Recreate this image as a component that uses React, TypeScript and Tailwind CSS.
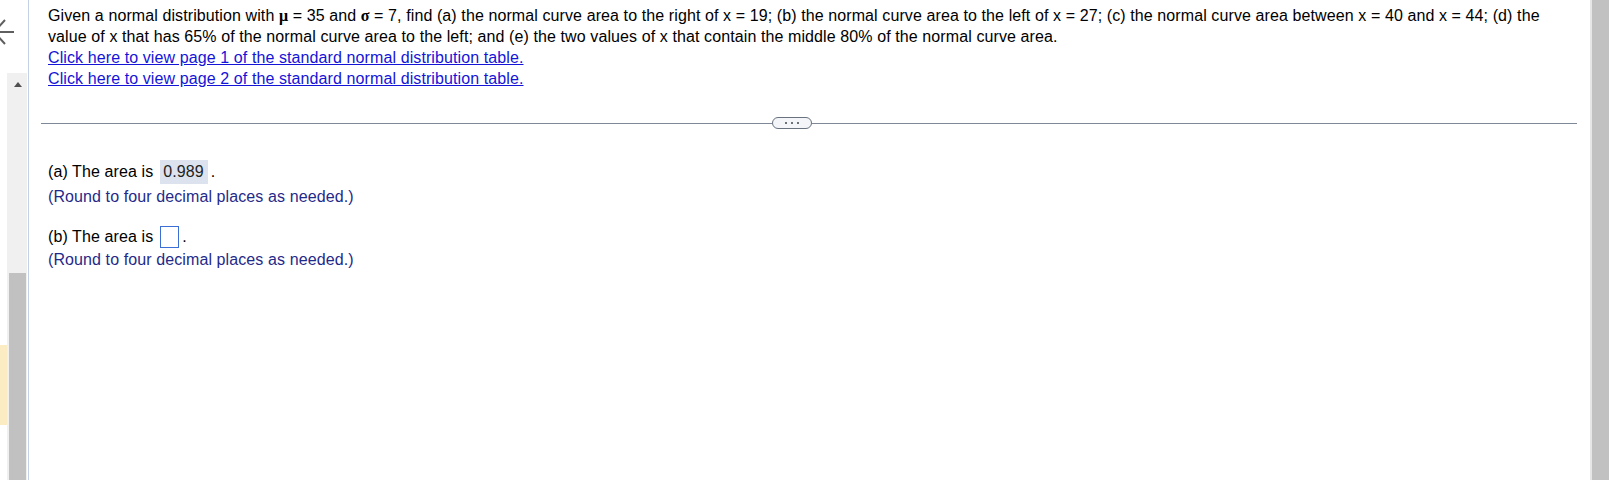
const FONT = { fontFamily: '"Liberation Sans", Arial, sans-serif' }
const SERIF = { fontFamily: '"Liberation Serif", "Times New Roman", serif' }

function LeftRail() {
  return (
    <div className="relative flex h-full w-[29px] shrink-0 border-r border-[#c4d0e6]">
      {/* back arrow, partly cut off by the window edge */}
      <svg className="absolute left-[-8px] top-[17px]" width="24" height="30" viewBox="0 0 24 30" fill="none">
        <path d="M22 15H2M2 15L13 3M2 15L13 27" stroke="#5f5f5f" strokeWidth="2" />
      </svg>
      <div className="w-[7px] shrink-0">
        <div className="mt-[345px] h-[80px] bg-[#fbecc3]" />
      </div>
      <div className="mt-[73px] flex w-[20px] shrink-0 flex-col bg-[#f0f0f0]">
        <div className="mt-[9px] flex justify-center pl-[1px]">
          <div className="h-0 w-0 border-x-[4px] border-b-[5px] border-x-transparent border-b-[#505050]" />
        </div>
        <div className="ml-[2px] mr-[1px] mt-[186px] flex-1 bg-[#c1c1c1]" />
      </div>
    </div>
  )
}

function Divider() {
  return (
    <div className="ml-[12px] mr-[13px] mt-[28px] flex h-[12px] items-center">
      <div className="h-px w-[731px] bg-[#7f8896]" />
      <div className="flex h-[12px] w-[40px] shrink-0 items-center justify-center gap-[4px] rounded-full border border-[#69727f] bg-[#f3f5f8]">
        <span className="h-[2px] w-[2px] rounded-full bg-[#3f4650]" />
        <span className="h-[2px] w-[2px] rounded-full bg-[#3f4650]" />
        <span className="h-[2px] w-[2px] rounded-full bg-[#3f4650]" />
      </div>
      <div className="h-px flex-1 bg-[#7f8896]" />
    </div>
  )
}

export default function App() {
  return (
    <div style={FONT} className="flex h-[480px] w-[1610px] overflow-hidden bg-white text-[16px] tracking-[0.1px] text-black">
      <LeftRail />

      <main className="flex min-w-0 flex-1 flex-col">
        <div className="pl-[19px] pr-[22px] pt-[5px] leading-[21px]">
          <p>
            Given a normal distribution with <span style={SERIF} className="font-bold">μ</span> = 35 and{' '}
            <span style={SERIF} className="font-bold">σ</span> = 7, find (a) the normal curve area to the right of x = 19; (b) the normal curve area to the left of x = 27; (c) the normal curve area between x = 40 and x = 44; (d) the value of x that has 65% of the normal curve area to the left; and (e) the two values of x that contain the middle 80% of the normal curve area.
          </p>
          <a href="#" className="block w-fit text-[#1414d8] underline">
            Click here to view page 1 of the standard normal distribution table.
          </a>
          <a href="#" className="block w-fit text-[#1414d8] underline">
            Click here to view page 2 of the standard normal distribution table.
          </a>
        </div>

        <Divider />

        <div className="mt-[31px] pl-[19px]">
          <div className="flex h-[24px] items-center leading-[24px]">
            <span>(a) The area is</span>
            <span className="ml-[7px] h-[24px] bg-[#dce3ee] pl-[3px] pr-[4px] text-[#222]">0.989</span>
            <span className="ml-[3px]">.</span>
          </div>
          <p className="mt-[2px] leading-[21px] text-[#1f2a8a]">(Round to four decimal places as needed.)</p>

          <div className="mt-[18px] flex h-[24px] items-center leading-[24px]">
            <span>(b) The area is</span>
            <span className="ml-[7px] h-[22px] w-[19px] border border-[#3b6fd6] bg-white" />
            <span className="ml-[3px]">.</span>
          </div>
          <p className="leading-[21px] text-[#1f2a8a]">(Round to four decimal places as needed.)</p>
        </div>
      </main>

      <div className="flex h-full w-[20px] shrink-0">
        <div className="w-[2px] bg-[#e6e6e6]" />
        <div className="w-[17px] bg-[#c1c1c1]" />
        <div className="w-px bg-white" />
      </div>
    </div>
  )
}
